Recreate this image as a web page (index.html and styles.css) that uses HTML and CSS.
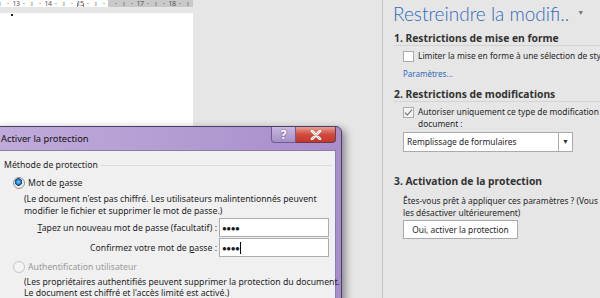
FILE: index.html
```html
<!DOCTYPE html>
<html>

<head>
    <title>Restreindre la modification</title>
    <link rel="stylesheet" href="styles.css">
</head>

<body>
    <div class="app">
        <div class="doc">
            <div class="ruler">
                <div class="ruler-white">
                    <span class="tick">ı</span><span class="tick">·</span><span class="num">13</span><span class="tick">·</span>
                    <span class="tick">ı</span><span class="tick">·</span><span class="num">14</span><span class="tick">·</span>
                    <span class="tick">ı</span><span class="tick">·</span><span class="num tab-stop">15</span><span class="tick">·</span>
                    <span class="tick">ı</span><span class="tick">·</span>
                </div>
                <div class="ruler-grey">
                    <span class="tick">·</span><span class="tick">ı</span><span class="tick">·</span><span class="num">17</span>
                    <span class="tick">·</span><span class="tick">ı</span><span class="tick">·</span><span class="num">18</span>
                    <span class="tick">·</span><span class="tick">ı</span>
                </div>
            </div>
            <div class="page">
                <span class="caret-mark"></span>
            </div>
        </div>

        <div class="panel">
            <div class="panel-title">
                <span>Restreindre la modifi..</span>
                <span class="panel-arrow">&#9660;</span>
            </div>

            <div class="section-head">1. Restrictions de mise en forme</div>
            <div class="check-row">
                <span class="checkbox"></span>
                <span class="nowrap">Limiter la mise en forme à une sélection de styles</span>
            </div>
            <div class="link">Paramètres...</div>

            <div class="section-head second">2. Restrictions de modifications</div>
            <div class="check-row">
                <span class="checkbox checked">
                    <svg width="9" height="9" viewBox="0 0 9 9"><path d="M1 4.6 L3.4 7 L8 1.6" fill="none" stroke="#6d6d6d" stroke-width="1.1"/></svg>
                </span>
                <span class="nowrap">Autoriser uniquement ce type de modification dans le<br>document :</span>
            </div>
            <div class="select">
                <span class="select-text">Remplissage de formulaires</span>
                <span class="select-btn">&#9660;</span>
            </div>

            <div class="section-head third">3. Activation de la protection</div>
            <div class="panel-text nowrap">Êtes-vous prêt à appliquer ces paramètres ? (Vous pourrez<br>les désactiver ultérieurement)</div>
            <div class="panel-button">Oui, activer la protection</div>
        </div>
    </div>

    <div class="dialog">
        <div class="dialog-titlebar">
            <span class="dialog-title">Activer la protection</span>
            <div class="dialog-buttons">
                <span class="btn-help">?</span>
                <span class="btn-close">
                    <svg width="14" height="10" viewBox="0 0 14 10"><path d="M3 1 L11 9 M11 1 L3 9" stroke="#fff" stroke-width="2.6" stroke-linecap="round"/><path d="M3 1 L11 9 M11 1 L3 9" stroke="#6a4a55" stroke-width="0.6" stroke-opacity="0.5" fill="none"/></svg>
                </span>
            </div>
        </div>
        <div class="dialog-body">
            <div class="group-label"><span>Méthode de protection</span><span class="group-line"></span></div>

            <div class="radio-row">
                <span class="radio selected"></span>
                <span>Mot de <u>p</u>asse</span>
            </div>
            <div class="note">(Le document n'est pas chiffré. Les utilisateurs malintentionnés peuvent<br>modifier le fichier et supprimer le mot de passe.)</div>

            <div class="field-row">
                <label><u>T</u>apez un nouveau mot de passe (facultatif) :</label>
                <span class="field">&#9679;&#9679;&#9679;&#9679;</span>
            </div>
            <div class="field-row">
                <label>Confirmez votre mot de <u>p</u>asse :</label>
                <span class="field">&#9679;&#9679;&#9679;&#9679;<span class="text-caret"></span></span>
            </div>

            <div class="radio-row disabled">
                <span class="radio"></span>
                <span>Authentification utilisateur</span>
            </div>
            <div class="note second">(Les propriétaires authentifiés peuvent supprimer la protection du document.<br>Le document est chiffré et l'accès limité est activé.)</div>
        </div>
    </div>
</body>

</html>
```

FILE: styles.css
```css
body {
    margin: 0;
    width: 600px;
    height: 298px;
    overflow: hidden;
    background-color: #e6e6e6;
    font-family: "Noto Sans", "Open Sans", sans-serif;
    color: #262626;
}

.app {
    display: flex;
    height: 298px;
}

/* document side */

.doc {
    width: 382px;
    border-right: 1px solid #c6c6c6;
}

.ruler {
    display: flex;
    height: 7px;
    width: 193px;
    overflow: hidden;
    font-size: 7px;
    line-height: 7px;
    color: #555555;
}

.ruler-white {
    width: 112px;
    background-color: #ffffff;
    display: flex;
    margin-left: -4px;
}

.ruler-grey {
    width: 85px;
    background-color: #c9c9c9;
    display: flex;
    padding-left: 4px;
}

.ruler .tick,
.ruler .num {
    width: 8px;
    flex: none;
    text-align: center;
}

.ruler .num {
    letter-spacing: -0.5px;
}

.tab-stop {
    position: relative;
}

.tab-stop::after {
    content: "";
    position: absolute;
    left: 1px;
    top: 3px;
    width: 5px;
    height: 5px;
    border: 1px solid #888888;
    border-top: none;
}

.page {
    margin-top: 6px;
    width: 193px;
    height: 285px;
    background-color: #ffffff;
    position: relative;
}

.caret-mark {
    position: absolute;
    left: 11px;
    top: 1px;
    width: 2px;
    height: 2px;
    background-color: #222222;
}

/* task pane */

.panel {
    flex: 1;
    padding-left: 10px;
    font-size: 8.4px;
    line-height: 12px;
    overflow: hidden;
}

.nowrap {
    white-space: nowrap;
}

.panel-title {
    display: flex;
    align-items: center;
    margin-top: 2px;
    height: 24px;
    font-family: Lato, "Noto Sans", sans-serif;
    font-weight: 300;
    font-size: 19px;
    color: #2e6bb8;
    white-space: nowrap;
}

.panel-arrow {
    font-size: 7px;
    color: #777777;
    margin-left: 8px;
    margin-top: -4px;
}

.section-head {
    margin-top: 5px;
    font-weight: bold;
    font-size: 10.3px;
    line-height: 14px;
    color: #333333;
    border-bottom: 1px solid #d4d4d4;
    margin-left: 1px;
    white-space: nowrap;
}

.section-head.second {
    margin-top: 7px;
}

.section-head.third {
    margin-top: 22px;
    border-bottom: none;
}

.check-row {
    display: flex;
    margin-top: 4px;
    margin-left: 10px;
}

.checkbox {
    flex: none;
    width: 9px;
    height: 9px;
    border: 1px solid #ababab;
    background-color: #ffffff;
    margin-top: 1px;
    margin-right: 4px;
    display: flex;
    align-items: center;
    justify-content: center;
}

.checkbox.checked {
    background-color: #f4f4f4;
}

.link {
    margin-top: 6px;
    margin-left: 10px;
    font-size: 8px;
    color: #2e6bb8;
}

.select {
    display: flex;
    margin-top: 2px;
    margin-left: 10px;
    width: 168px;
    height: 18px;
    border: 1px solid #ababab;
    background-color: #ffffff;
}

.select-text {
    flex: 1;
    padding-left: 3px;
    line-height: 18px;
}

.select-btn {
    width: 13px;
    border-left: 1px solid #ababab;
    text-align: center;
    font-size: 7px;
    line-height: 18px;
    color: #333333;
}

.panel-text {
    margin-top: 7px;
    margin-left: 10px;
}

.panel-button {
    display: inline-block;
    margin-top: 1px;
    margin-left: 10px;
    width: 113px;
    height: 17px;
    line-height: 17px;
    text-align: center;
    background-color: #ffffff;
    border: 1px solid #ababab;
}

/* dialog window */

.dialog {
    position: absolute;
    left: -8px;
    top: 126px;
    width: 348px;
    height: 200px;
    border: 1px solid #4b3d66;
    border-radius: 6px 6px 0 0;
    background: linear-gradient(to right, #c0abdb 0%, #b49dd3 50%, #a88dcb 100%);
    box-shadow: 3px 3px 9px rgba(0, 0, 0, 0.45);
    font-size: 8.7px;
    line-height: 12px;
    color: #1e1e1e;
}

.dialog-titlebar {
    display: flex;
    justify-content: space-between;
    height: 23px;
}

.dialog-title {
    padding-left: 8px;
    line-height: 24px;
    font-size: 9.3px;
    color: #111111;
}

.dialog-buttons {
    display: flex;
    height: 16px;
    margin-right: 5px;
}

.btn-help {
    width: 23px;
    background: linear-gradient(#c9b8e0, #a690c6);
    border: 1px solid #6e5c8c;
    border-top: none;
    border-radius: 0 0 0 4px;
    color: #ffffff;
    font-weight: bold;
    font-size: 12px;
    line-height: 15px;
    text-align: center;
    text-shadow: 0 0 2px #4b3d66;
}

.btn-close {
    width: 39px;
    background: linear-gradient(#e8a093, #d24a3c 50%, #c3372b);
    border: 1px solid #6e3a4a;
    border-top: none;
    border-left: none;
    border-radius: 0 0 4px 0;
    display: flex;
    align-items: center;
    justify-content: center;
}

.dialog-body {
    margin: 0 5px 0 6px;
    height: 177px;
    background-color: #f0f0f0;
    border: 1px solid #8c7ca8;
    padding-left: 4px;
}

.group-label {
    display: flex;
    align-items: center;
    margin-top: 8px;
    white-space: nowrap;
}

.group-line {
    flex: 1;
    height: 1px;
    background-color: #dcdcdc;
    margin: 0 3px 0 3px;
}

.radio-row {
    display: flex;
    align-items: center;
    margin-top: 6px;
    margin-left: 9px;
    height: 12px;
}

.radio {
    width: 10px;
    height: 10px;
    border: 1px solid #8f8f8f;
    border-radius: 50%;
    background: radial-gradient(circle at 50% 40%, #ffffff, #dcdcdc);
    margin-right: 3px;
}

.radio.selected {
    background: radial-gradient(circle at 45% 40%, #8fd0ff 0, #2a8ad6 2px, #0e3f7a 3.5px, #e8e8e8 4px, #ffffff 100%);
}

.radio-row.disabled {
    color: #9a9a9a;
    margin-top: 4px;
}

.radio-row.disabled .radio {
    border-color: #c6c6c6;
    background: #f4f4f4;
}

.note {
    margin-top: 4px;
    margin-left: 20px;
    white-space: nowrap;
}

.note.second {
    margin-top: 4px;
    line-height: 11px;
}

.field-row {
    display: flex;
    justify-content: flex-end;
    align-items: center;
    margin-top: 1px;
    margin-right: 6px;
    height: 19px;
}

.field-row label {
    margin-right: 2px;
}

.field {
    width: 106px;
    height: 17px;
    border: 1px solid #abadb3;
    background-color: #ffffff;
    padding-left: 2px;
    font-size: 8px;
    line-height: 17px;
    letter-spacing: -0.5px;
    display: flex;
    align-items: center;
}

.text-caret {
    width: 1px;
    height: 12px;
    background-color: #000000;
    margin-left: 1px;
}
```
